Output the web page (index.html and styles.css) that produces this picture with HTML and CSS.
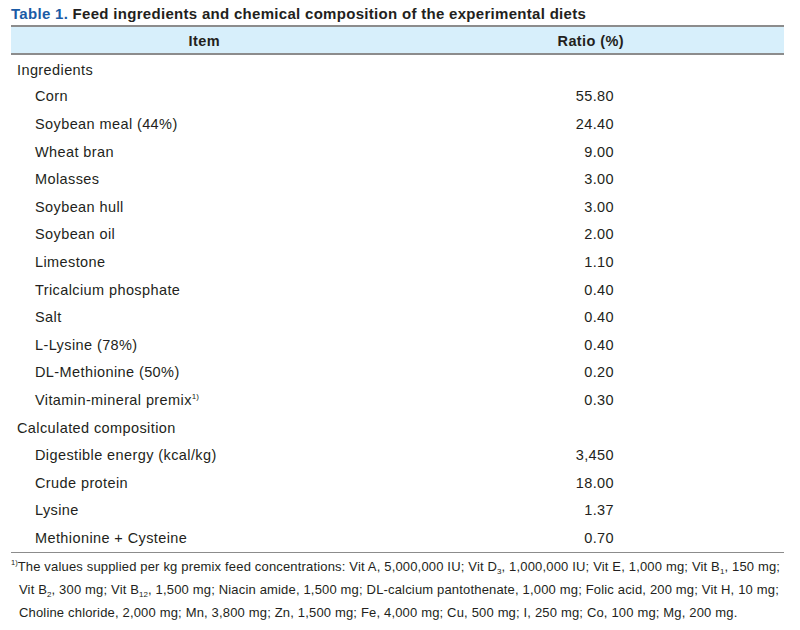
FILE: index.html
```html
<!DOCTYPE html>
<html>
<head>
<meta charset="utf-8">
<link rel="stylesheet" href="styles.css">
</head>
<body>
<div class="wrap">
  <div class="title"><span class="tnum">Table 1.</span> Feed ingredients and chemical composition of the experimental diets</div>
  <table class="tbl">
    <thead>
      <tr><th>Item</th><th>Ratio (%)</th></tr>
    </thead>
    <tbody>
      <tr><td class="grp">Ingredients</td><td></td></tr>
      <tr><td class="sub">Corn</td><td class="num">55.80</td></tr>
      <tr><td class="sub">Soybean meal (44%)</td><td class="num">24.40</td></tr>
      <tr><td class="sub">Wheat bran</td><td class="num">9.00</td></tr>
      <tr><td class="sub">Molasses</td><td class="num">3.00</td></tr>
      <tr><td class="sub">Soybean hull</td><td class="num">3.00</td></tr>
      <tr><td class="sub">Soybean oil</td><td class="num">2.00</td></tr>
      <tr><td class="sub">Limestone</td><td class="num">1.10</td></tr>
      <tr><td class="sub">Tricalcium phosphate</td><td class="num">0.40</td></tr>
      <tr><td class="sub">Salt</td><td class="num">0.40</td></tr>
      <tr><td class="sub">L-Lysine (78%)</td><td class="num">0.40</td></tr>
      <tr><td class="sub">DL-Methionine (50%)</td><td class="num">0.20</td></tr>
      <tr><td class="sub">Vitamin-mineral premix<sup>1)</sup></td><td class="num">0.30</td></tr>
      <tr><td class="grp">Calculated composition</td><td></td></tr>
      <tr><td class="sub">Digestible energy (kcal/kg)</td><td class="num">3,450</td></tr>
      <tr><td class="sub">Crude protein</td><td class="num">18.00</td></tr>
      <tr><td class="sub">Lysine</td><td class="num">1.37</td></tr>
      <tr><td class="sub">Methionine + Cysteine</td><td class="num">0.70</td></tr>
    </tbody>
  </table>
  <p class="note"><sup>1)</sup>The values supplied per kg premix feed concentrations: Vit A, 5,000,000 IU; Vit D<sub>3</sub>, 1,000,000 IU; Vit E, 1,000 mg; Vit B<sub>1</sub>, 150 mg;<br>Vit B<sub>2</sub>, 300 mg; Vit B<sub>12</sub>, 1,500 mg; Niacin amide, 1,500 mg; DL-calcium pantothenate, 1,000 mg; Folic acid, 200 mg; Vit H, 10 mg;<br>Choline chloride, 2,000 mg; Mn, 3,800 mg; Zn, 1,500 mg; Fe, 4,000 mg; Cu, 500 mg; I, 250 mg; Co, 100 mg; Mg, 200 mg.</p>
</div>
</body>
</html>
```
FILE: styles.css
```css
html, body {
  margin: 0;
  padding: 0;
  background: #ffffff;
}
body {
  font-family: "Liberation Sans", Arial, sans-serif;
  color: #231f20;
}
.wrap {
  width: 773px;
  margin-left: 11px;
  padding-top: 4px;
}
.title {
  font-size: 15px;
  font-weight: bold;
  line-height: 19px;
  height: 21px;
  letter-spacing: 0.3px;
  white-space: nowrap;
}
.tnum {
  color: #1a5ba6;
}
.tbl {
  width: 100%;
  border-collapse: collapse;
  font-size: 14.5px;
  letter-spacing: 0.4px;
  table-layout: fixed;
}
.tbl th {
  width: 50%;
  background: #d7effb;
  border-top: 2px solid #8c8c8c;
  border-bottom: 2px solid #8c8c8c;
  height: 25px;
  padding: 1px 0 0 0;
  font-weight: bold;
  text-align: center;
}
.tbl td {
  height: 27.6px;
  padding: 0;
  vertical-align: middle;
  white-space: nowrap;
}
.tbl tbody tr:first-child td {
  padding-top: 2px;
  height: 25.6px;
}
.tbl tbody tr:last-child td {
  border-bottom: 1.5px solid #8c8c8c;
}
.tbl td.grp {
  padding-left: 6px;
}
.tbl td.sub {
  padding-left: 24px;
}
.tbl td.num {
  text-align: right;
  padding-right: 170px;
}
sup {
  font-size: 8px;
  vertical-align: 6px;
  line-height: 0;
  letter-spacing: 0;
}
sub {
  font-size: 8px;
  vertical-align: -3px;
  line-height: 0;
  letter-spacing: 0;
}
.note {
  margin: 0;
  padding: 2px 0 0 8px;
  text-indent: -8px;
  font-size: 13px;
  line-height: 23px;
  letter-spacing: 0.17px;
  white-space: nowrap;
}
.note sup {
  font-size: 7.5px;
}
```
